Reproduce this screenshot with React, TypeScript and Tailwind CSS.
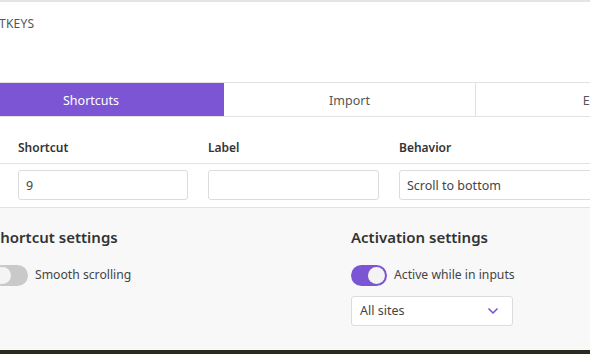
import { ChevronDown } from "lucide-react";

function Toggle({ on }: { on: boolean }) {
  return (
    <span
      className={`relative inline-flex h-[21px] w-[36px] shrink-0 items-center rounded-full ${
        on ? "bg-[#7b55d4]" : "bg-[#c9c9c9]"
      }`}
    >
      <span
        className={`absolute h-[17px] w-[17px] rounded-full bg-[#f4f4f4] ${on ? "left-[17px]" : "left-[2px]"}`}
      />
    </span>
  );
}

export default function App() {
  return (
    <div
      className="w-[590px] h-[354px] overflow-hidden flex flex-col bg-white text-[#444]"
      style={{ fontFamily: '"Noto Sans", "Open Sans", sans-serif' }}
    >
      {/* Top edge */}
      <div className="h-[2px] shrink-0 bg-[#e4e4e4]" />

      {/* Header */}
      <div className="h-[81px] shrink-0 border-b border-[#e2e2e2]">
        <p className="-ml-[34px] pt-[14px] text-[12px] leading-[16px] text-[#555] tracking-[0.2px]">SHORTKEYS</p>
      </div>

      {/* Tabs */}
      <div className="flex h-[34px] shrink-0 border-b border-[#e2e2e2] text-[12.5px]">
        <div className="w-[224px] shrink-0 bg-[#7b55d4] text-white flex items-center pt-[3px] pl-[63px]">Shortcuts</div>
        <div className="w-[252px] shrink-0 flex items-center justify-center pt-[3px] border-r border-[#e2e2e2] text-[#555]">
          Import
        </div>
        <div className="w-[252px] shrink-0 flex items-center justify-center pt-[3px] text-[#555]">Export</div>
      </div>

      {/* Shortcuts table */}
      <div className="flex h-[47px] shrink-0 items-end pb-[6px] border-b border-[#e2e2e2] text-[12px] font-semibold text-[#333]">
        <div className="w-[208px] shrink-0 pl-[18px]">Shortcut</div>
        <div className="w-[191px] shrink-0">Label</div>
        <div>Behavior</div>
      </div>
      <div className="flex h-[44px] shrink-0 pt-[6px] border-b border-[#e2e2e2] text-[12.5px]">
        <div className="w-[208px] shrink-0 pl-[18px]">
          <div className="h-[30px] w-[170px] rounded-[3px] border border-[#dcdcdc] flex items-center pt-[2px] px-[7px]">9</div>
        </div>
        <div className="w-[191px] shrink-0">
          <div className="h-[30px] w-[171px] rounded-[3px] border border-[#dcdcdc]" />
        </div>
        <div className="flex-1">
          <div className="h-[30px] w-[220px] rounded-[3px] border border-[#dcdcdc] flex items-center pt-[2px] px-[7px]">
            Scroll to bottom
          </div>
        </div>
      </div>

      {/* Settings */}
      <div className="flex-1 flex bg-[#f8f8f8] pt-[18px]">
        <div className="w-[359px] shrink-0 -ml-[8px]">
          <h2 className="text-[15px] leading-[22px] font-semibold text-[#333]">Shortcut settings</h2>
          <div className="mt-[17px] flex items-center gap-[7px] text-[12.2px]">
            <Toggle on={false} />
            <span>Smooth scrolling</span>
          </div>
        </div>
        <div className="w-[230px] shrink-0">
          <h2 className="text-[15px] leading-[22px] font-semibold text-[#333]">Activation settings</h2>
          <div className="mt-[17px] flex items-center gap-[7px] text-[12.2px]">
            <Toggle on={true} />
            <span>Active while in inputs</span>
          </div>
          <div className="mt-[10px] h-[30px] w-[162px] rounded-[3px] border border-[#dcdcdc] bg-white flex items-center justify-between pl-[8px] pr-[11px] text-[12.5px]">
            <span>All sites</span>
            <ChevronDown size={16} strokeWidth={2.5} className="text-[#7b55d4]" />
          </div>
        </div>
      </div>

      {/* Bottom edge */}
      <div className="h-[4px] shrink-0 bg-[#2b2a22]" />
    </div>
  );
}
